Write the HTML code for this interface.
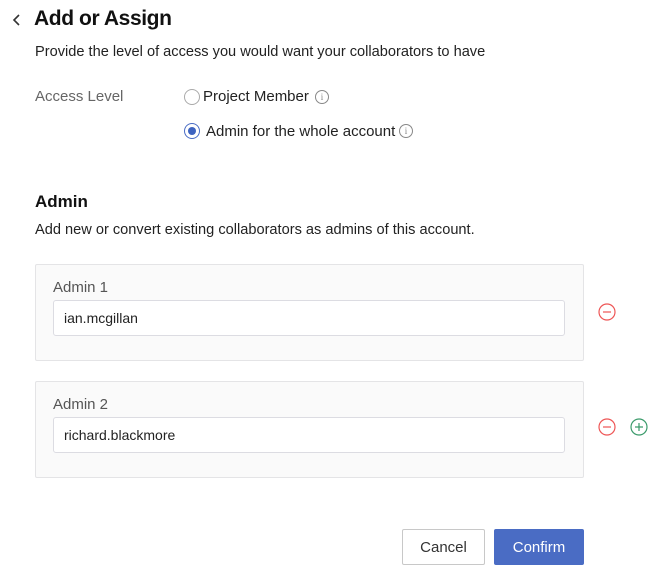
<!DOCTYPE html>
<html><head><style>
body{margin:0;width:654px;height:574px;background:#fff;font-family:"Liberation Sans",sans-serif;color:#222;position:relative;overflow:hidden}
.a{position:absolute;white-space:nowrap}
.box{position:absolute;left:35px;width:547px;height:95px;background:#fafafa;border:1px solid #e4e4e6;border-radius:2px}
.lab{position:absolute;left:17px;top:14px;font-size:15px;color:#555}
.inp{position:absolute;left:17px;height:36px;background:#fff;border:1px solid #dcdce2;border-radius:3px;font-size:14px;line-height:34px;padding-left:10px;box-sizing:border-box;width:512px}
.radio{position:absolute;width:14px;height:14px;border:1px solid #aaa;border-radius:50%;background:#fff}
.info{position:absolute;width:12px;height:12px;border:1px solid #888;border-radius:50%;font-size:9px;line-height:12px;text-align:center;color:#888;font-family:"Liberation Serif",serif}
.btn{position:absolute;top:529px;height:36px;border-radius:2px;font-size:15px;display:flex;align-items:center;justify-content:center;box-sizing:border-box}
</style></head><body>
<svg class="a" style="left:11px;top:13px" width="12" height="14"><path d="M8 2 L3 7 L8 12" fill="none" stroke="#333" stroke-width="1.6"/></svg>
<div class="a" style="left:34px;top:7px;font-size:21px;font-weight:bold;color:#111;letter-spacing:-0.4px">Add or Assign</div>
<div class="a" style="left:35px;top:44px;font-size:14.6px">Provide the level of access you would want your collaborators to have</div>
<div class="a" style="left:35px;top:88px;font-size:15px;color:#666">Access Level</div>
<div class="radio" style="left:184px;top:89px"></div>
<div class="a" style="left:203px;top:88px;font-size:15px">Project Member</div>
<div class="info" style="left:315px;top:90px">i</div>
<div class="radio" style="left:184px;top:123px;border-color:#4a6cc4"><div style="position:absolute;left:3px;top:3px;width:8px;height:8px;border-radius:50%;background:#3d63c0"></div></div>
<div class="a" style="left:206px;top:123px;font-size:15px">Admin for the whole account</div>
<div class="info" style="left:399px;top:124px">i</div>
<div class="a" style="left:35px;top:192px;font-size:17px;font-weight:bold;color:#111">Admin</div>
<div class="a" style="left:35px;top:222px;font-size:14.6px">Add new or convert existing collaborators as admins of this account.</div>
<div class="box" style="top:264px"><div class="lab">Admin 1</div><div class="inp" style="top:35px">ian.mcgillan</div></div>
<div class="box" style="top:381px"><div class="lab">Admin 2</div><div class="inp" style="top:35px">richard.blackmore</div></div>
<svg class="a" style="left:598px;top:303px" width="18" height="18"><circle cx="9" cy="9" r="8" fill="none" stroke="#e55" stroke-width="1.2"/><path d="M5 9H13" stroke="#e55" stroke-width="1.2"/></svg>
<svg class="a" style="left:598px;top:418px" width="18" height="18"><circle cx="9" cy="9" r="8" fill="none" stroke="#e55" stroke-width="1.2"/><path d="M5 9H13" stroke="#e55" stroke-width="1.2"/></svg>
<svg class="a" style="left:630px;top:418px" width="18" height="18"><circle cx="9" cy="9" r="8" fill="none" stroke="#3a9a6a" stroke-width="1.2"/><path d="M5 9H13M9 5V13" stroke="#3a9a6a" stroke-width="1.2"/></svg>
<div class="btn" style="left:402px;width:83px;border:1px solid #c8c8c8;background:#fff;color:#333">Cancel</div>
<div class="btn" style="left:494px;width:90px;background:#4a6cc4;color:#fff">Confirm</div>
</body></html>
